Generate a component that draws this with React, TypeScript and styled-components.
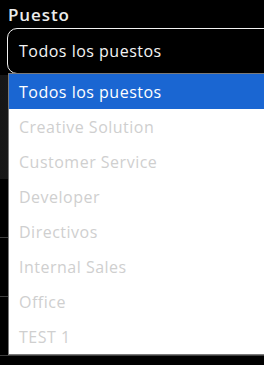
import React from 'react'
import styled, { createGlobalStyle } from 'styled-components'

const GlobalStyle = createGlobalStyle`
  html, body {
    margin: 0;
    padding: 0;
    background: #000;
    overflow: hidden;
  }
  body {
    font-family: 'Open Sans', 'Noto Sans', sans-serif;
  }
`

const Page = styled.div`
  position: relative;
  width: 264px;
  height: 365px;
  overflow: hidden;
  background: #000;
`

const Field = styled.div`
  display: flex;
  flex-direction: column;
  padding: 3px 0 0 7px;
`

const Label = styled.label`
  margin-left: 1px;
  font-size: 17px;
  font-weight: 600;
  line-height: 24px;
  letter-spacing: 0.9px;
  color: #ececec;
`

const SelectBox = styled.div`
  box-sizing: border-box;
  display: flex;
  align-items: center;
  width: 320px;
  height: 46px;
  margin-top: 1px;
  padding-left: 11px;
  border: 1px solid #f2f2f2;
  border-radius: 10px;
  font-size: 16px;
  letter-spacing: 0.5px;
  color: #f4f4f4;
`

const Backdrop = styled.div`
  display: flex;
  flex-direction: column;
  margin-top: 1px;
`

const BackdropPanel = styled.div`
  height: 104px;
  background: linear-gradient(to right, #161616, #3c3c3c);
`

const BackdropRow = styled.div`
  height: 58px;
  border-bottom: 1px solid #3f3f3f;
`

const Menu = styled.ul`
  position: absolute;
  top: 73px;
  left: 8px;
  box-sizing: border-box;
  width: 300px;
  margin: 0;
  padding: 0;
  list-style: none;
  background: #fff;
  border: 1px solid #7a7a7a;
`

const Option = styled.li<{ $selected?: boolean }>`
  display: flex;
  align-items: center;
  height: 35px;
  padding-left: 10px;
  font-size: 16px;
  letter-spacing: 0.5px;
  color: ${({ $selected }) => ($selected ? '#fff' : '#cfcfcf')};
  background: ${({ $selected }) => ($selected ? '#1a66d2' : 'transparent')};
`

const options = [
  'Todos los puestos',
  'Creative Solution',
  'Customer Service',
  'Developer',
  'Directivos',
  'Internal Sales',
  'Office',
  'TEST 1',
]

export default function App() {
  return (
    <Page>
      <GlobalStyle />
      <Field>
        <Label>Puesto</Label>
        <SelectBox>Todos los puestos</SelectBox>
      </Field>
      <Backdrop>
        <BackdropPanel />
        <BackdropRow />
        <BackdropRow />
        <BackdropRow />
      </Backdrop>
      <Menu>
        {options.map((o, i) => (
          <Option key={o} $selected={i === 0}>
            {o}
          </Option>
        ))}
      </Menu>
    </Page>
  )
}
